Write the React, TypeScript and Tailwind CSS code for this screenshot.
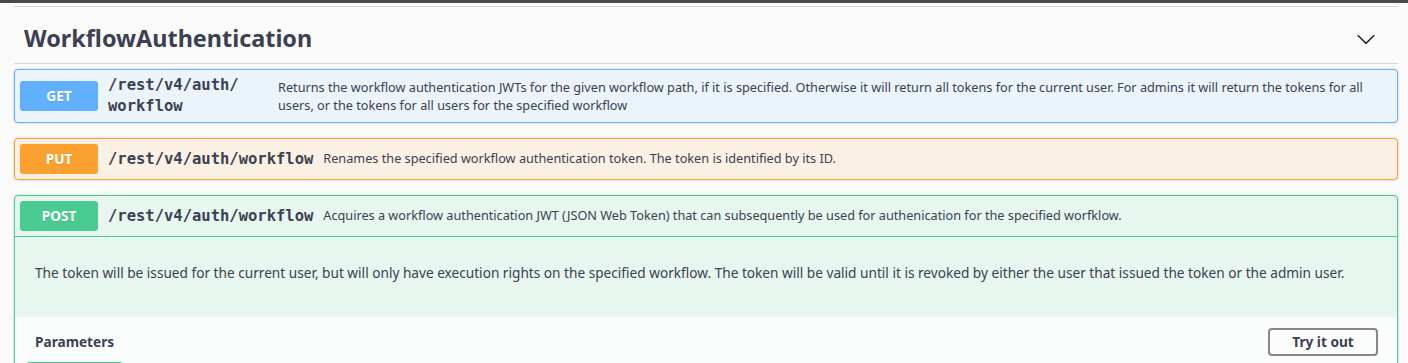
const methodColors: Record<string, { badge: string; block: string }> = {
  GET: { badge: "bg-[#61affe]", block: "border-[#61affe] bg-[#ebf3fb]" },
  PUT: { badge: "bg-[#fca130]", block: "border-[#fca130] bg-[#fbf0e4]" },
  POST: { badge: "bg-[#49cc90]", block: "border-[#49cc90] bg-[#e7f6ef]" },
};

const Badge = ({ method }: { method: string }) => (
  <span
    className={`flex h-[30px] w-[78px] shrink-0 items-center justify-center rounded-[3px] text-[13.65px] font-bold text-white [text-shadow:0_1px_0_rgba(0,0,0,0.1)] ${methodColors[method].badge}`}
  >
    {method}
  </span>
);

const Chevron = () => (
  <svg width="20" height="20" viewBox="0 0 20 20" className="fill-[#222]">
    <path d="M17.418 6.109c.272-.268.709-.268.979 0s.271.701 0 .969l-7.908 7.83c-.27.268-.707.268-.979 0l-7.908-7.83c-.27-.268-.27-.701 0-.969.271-.268.709-.268.979 0L10 13.25l7.418-7.141z" />
  </svg>
);

const mono = "font-['DejaVu_Sans_Mono',monospace] text-[15.5px] font-bold leading-[21px] text-[#3b4151]";

export default function App() {
  return (
    <div className="h-[363px] w-[1408px] overflow-hidden bg-[#fafafa] font-['Noto_Sans',sans-serif] text-[#3b4151]">
      <div className="h-[3px] bg-[#4a4a4a]" />
      <div className="pl-[14px] pr-[10px] pt-[3px]">
        <div className="border-t border-[#d7d8db]" />

        {/* tag header */}
        <div className="mb-[5px] flex h-[57px] items-center justify-between border-b border-[#d7d8db] pl-[10px] pr-[22px] pt-[8px]">
          <h3 className="text-[23.4px] font-bold">WorkflowAuthentication</h3>
          <Chevron />
        </div>

        {/* GET */}
        <div className={`mb-[15px] rounded-[4px] border shadow-[0_0_3px_rgba(0,0,0,0.19)] ${methodColors.GET.block}`}>
          <div className="flex items-center p-[5px]">
            <Badge method="GET" />
            <span className={`ml-[10px] w-[166px] shrink-0 ${mono}`}>
              /rest/v4/auth/
              <br />
              workflow
            </span>
            <span className="ml-[4px] flex-1 pr-[20px] text-[12.7px] leading-[18px]">
              Returns the workflow authentication JWTs for the given workflow path, if it is specified. Otherwise it will return all tokens for the current user. For admins it will return the tokens for all users, or the tokens for all users for the specified workflow
            </span>
          </div>
        </div>

        {/* PUT */}
        <div className={`mb-[15px] rounded-[4px] border shadow-[0_0_3px_rgba(0,0,0,0.19)] ${methodColors.PUT.block}`}>
          <div className="flex items-center p-[5px]">
            <Badge method="PUT" />
            <span className={`ml-[10px] shrink-0 ${mono}`}>/rest/v4/auth/workflow</span>
            <span className="ml-[10px] flex-1 text-[12.7px]">
              Renames the specified workflow authentication token. The token is identified by its ID.
            </span>
          </div>
        </div>

        {/* POST (expanded) */}
        <div className={`rounded-[4px] border shadow-[0_0_3px_rgba(0,0,0,0.19)] ${methodColors.POST.block}`}>
          <div className="flex items-center border-b border-[#49cc90] p-[5px]">
            <Badge method="POST" />
            <span className={`ml-[10px] shrink-0 ${mono}`}>/rest/v4/auth/workflow</span>
            <span className="ml-[10px] flex-1 text-[12.7px]">
              Acquires a workflow authentication JWT (JSON Web Token) that can subsequently be used for authenication for the specified worfklow.
            </span>
          </div>
          <div className="h-[80px] px-[20px] pt-[26px] text-[13.65px]">
            The token will be issued for the current user, but will only have execution rights on the specified workflow. The token will be valid until it is revoked by either the user that issued the token or the admin user.
          </div>
          <div className="flex h-[50px] items-center justify-between bg-white/80 pl-[20px] pr-[19px]">
            <h4 className="relative text-[13.65px] font-bold">
              Parameters
              <span className="absolute left-1/2 top-[30px] h-[4px] w-[120%] -translate-x-1/2 bg-[#49cc90]" />
            </h4>
            <button className="h-[28px] w-[110px] rounded-[4px] border-2 border-[#888] text-[13.65px] font-bold text-[#3b4151]">
              Try it out
            </button>
          </div>
        </div>
      </div>
    </div>
  );
}
